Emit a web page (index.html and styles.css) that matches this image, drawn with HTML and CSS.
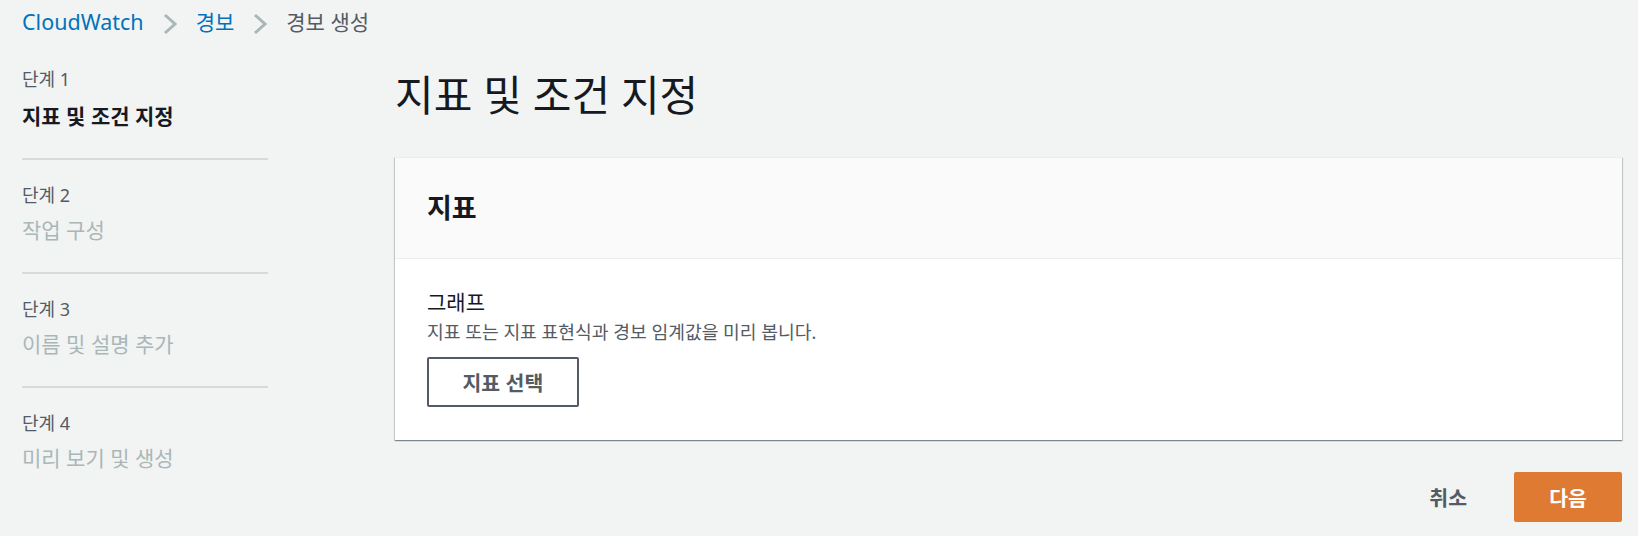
FILE: index.html
```html
<!DOCTYPE html>
<html lang="ko">
<head>
<meta charset="utf-8">
<title>경보 생성 - CloudWatch</title>
<link rel="stylesheet" href="styles.css">
</head>
<body>
<nav class="breadcrumb">
  <a class="crumb-link crumb-latin" href="#">CloudWatch</a>
  <svg class="chev" width="14" height="22" viewBox="0 0 14 22"><polyline points="2,2 12,11 2,20" fill="none" stroke="#aab7b8" stroke-width="3" stroke-linejoin="miter"/></svg>
  <a class="crumb-link" href="#">경보</a>
  <svg class="chev" width="14" height="22" viewBox="0 0 14 22"><polyline points="2,2 12,11 2,20" fill="none" stroke="#aab7b8" stroke-width="3" stroke-linejoin="miter"/></svg>
  <span class="crumb-current">경보 생성</span>
</nav>
<div class="layout">
  <aside class="steps">
    <div class="step step-active">
      <div class="step-label">단계 1</div>
      <div class="step-title">지표 및 조건 지정</div>
    </div>
    <div class="step">
      <div class="step-label">단계 2</div>
      <div class="step-title">작업 구성</div>
    </div>
    <div class="step">
      <div class="step-label">단계 3</div>
      <div class="step-title">이름 및 설명 추가</div>
    </div>
    <div class="step step-last">
      <div class="step-label">단계 4</div>
      <div class="step-title">미리 보기 및 생성</div>
    </div>
  </aside>
  <main class="content">
    <h1 class="page-title">지표 및 조건 지정</h1>
    <section class="card">
      <div class="card-header"><h2 class="card-title">지표</h2></div>
      <div class="card-body">
        <div class="field-label">그래프</div>
        <div class="field-desc">지표 또는 지표 표현식과 경보 임계값을 미리 봅니다.</div>
        <button class="btn-normal" type="button">지표 선택</button>
      </div>
    </section>
    <div class="actions">
      <button class="btn-link" type="button">취소</button>
      <button class="btn-primary" type="button">다음</button>
    </div>
  </main>
</div>
</body>
</html>
```
FILE: styles.css
```css
* { box-sizing: border-box; }
html, body {
  margin: 0;
  padding: 0;
  background: #f2f3f3;
  font-family: "Noto Sans", "Noto Sans CJK KR", sans-serif;
  color: #16191f;
}
.breadcrumb {
  display: flex;
  align-items: center;
  height: 44px;
  padding-left: 22px;
  font-size: 21px;
  line-height: 28px;
}
.crumb-link {
  color: #0073bb;
  text-decoration: none;
}
.crumb-latin { font-size: 21.5px; }
.crumb-current { color: #545b64; }
.chev {
  display: block;
  margin: 3px 19px 0 19px;
}
.layout {
  display: grid;
  grid-template-columns: 246px 1fr;
  column-gap: 127px;
  padding: 0 16px 0 22px;
}
.step {
  padding: 23px 0 28px;
  border-bottom: 2px solid #d5dbdb;
}
.step-last { border-bottom: none; }
.step-label {
  font-size: 18px;
  line-height: 24px;
  color: #545b64;
}
.step-title {
  margin-top: 9px;
  font-size: 21px;
  line-height: 28px;
  color: #aab7b8;
}
.step-active .step-title {
  margin-top: 11px;
  font-weight: 700;
  color: #16191f;
}
.page-title {
  margin: 26px 0 37px;
  font-size: 42px;
  line-height: 50px;
  font-weight: 400;
  color: #16191f;
}
.card {
  background: #ffffff;
  border-top: 1px solid #eaeded;
  box-shadow: 0 1px 1px 0 rgba(0, 28, 36, 0.3), 1px 1px 1px 0 rgba(0, 28, 36, 0.15), -1px 1px 1px 0 rgba(0, 28, 36, 0.15);
}
.card-header {
  background: #fafafa;
  padding: 33px 32px;
  border-bottom: 1px solid #eaeded;
}
.card-title {
  margin: 0;
  font-size: 27px;
  line-height: 34px;
  font-weight: 700;
}
.card-body {
  padding: 30px 32px 33px;
}
.field-label {
  font-size: 21px;
  line-height: 26px;
  color: #16191f;
}
.field-desc {
  margin-top: 4.6px;
  font-size: 18.2px;
  line-height: 24px;
  color: #545b64;
}
.btn-normal {
  display: block;
  margin-top: 13.4px;
  height: 50px;
  padding: 0 33.5px;
  background: #ffffff;
  border: 2px solid #545b64;
  border-radius: 2px;
  font-family: inherit;
  font-size: 20.5px;
  font-weight: 700;
  color: #545b64;
}
.actions {
  display: flex;
  justify-content: flex-end;
  align-items: center;
  margin-top: 32px;
}
.btn-link {
  height: 50px;
  padding: 0 22px;
  margin-right: 25px;
  background: transparent;
  border: none;
  font-family: inherit;
  font-size: 20.5px;
  font-weight: 700;
  color: #545b64;
}
.btn-primary {
  height: 50px;
  width: 108px;
  padding: 0;
  background: #df7a33;
  border: none;
  border-radius: 2px;
  font-family: inherit;
  font-size: 20.5px;
  font-weight: 700;
  color: #ffffff;
}
```
